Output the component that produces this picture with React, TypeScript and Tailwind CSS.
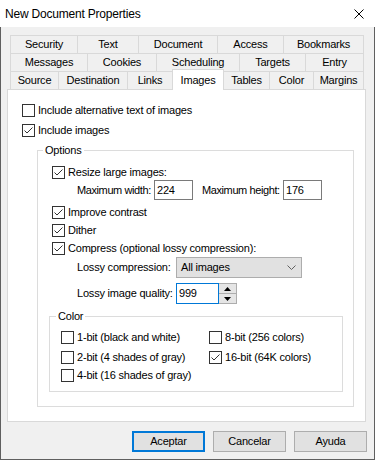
import type { ReactNode } from 'react';

function Box({ checked }: { checked?: boolean }) {
  return (
    <span className="flex h-[13px] w-[13px] shrink-0 items-center justify-center border border-[#333333] bg-white">
      {checked && (
        <svg width="11" height="11" viewBox="0 0 11 11">
          <path d="M1.5 5.5 L4 8 L9.5 2.5" fill="none" stroke="#333333" strokeWidth="1" />
        </svg>
      )}
    </span>
  );
}

function Check({ label, checked, className = '' }: { label: string; checked?: boolean; className?: string }) {
  return (
    <div className={`flex items-center ${className}`}>
      <Box checked={checked} />
      <span className="ml-[3px] whitespace-nowrap">{label}</span>
    </div>
  );
}

function Tab({ label, w, last }: { label: string; w: string; last?: boolean }) {
  return (
    <div
      className={`flex h-[18px] items-center justify-center border-l border-t border-[#d9d9d9] ${w} ${
        last ? 'border-r' : ''
      }`}
    >
      {label}
    </div>
  );
}

function Group({ title, className, legendClass, children }: { title: string; className: string; legendClass: string; children: ReactNode }) {
  return (
    <fieldset className={`border border-[#dcdcdc] ${className}`}>
      <legend className={`px-[2px] leading-[15px] ${legendClass}`}>{title}</legend>
      {children}
    </fieldset>
  );
}

function Button({ label, primary }: { label: string; primary?: boolean }) {
  return (
    <button
      className={`flex h-[21px] w-[73px] items-center justify-center bg-[#e1e1e1] ${
        primary ? 'border-2 border-[#0078d7]' : 'border border-[#adadad]'
      }`}
    >
      {label}
    </button>
  );
}

export default function App() {
  return (
    <div className="flex h-[460px] w-[375px] flex-col bg-white font-['Liberation_Sans',Arial,sans-serif] text-[11px] tracking-[-0.2px] text-black">
      {/* title bar */}
      <div className="flex h-[27px] shrink-0 items-center justify-between pl-[5px] pr-[11px]">
        <span className="text-[12px]">New Document Properties</span>
        <svg width="10" height="10" viewBox="0 0 10 10">
          <path d="M0.5 0.5 L9.5 9.5 M9.5 0.5 L0.5 9.5" stroke="#000" strokeWidth="1" />
        </svg>
      </div>

      <div className="flex flex-1 flex-col border-x border-b border-[#5f5f5f] bg-[#f0f0f0] pt-[8px]">
        {/* tabs */}
        <div className="ml-[9px] flex">
          <Tab label="Security" w="w-[67px]" />
          <Tab label="Text" w="w-[61px]" />
          <Tab label="Document" w="w-[79px]" />
          <Tab label="Access" w="w-[66px]" />
          <Tab label="Bookmarks" w="w-[81px]" last />
        </div>
        <div className="ml-[9px] flex">
          <Tab label="Messages" w="w-[77px]" />
          <Tab label="Cookies" w="w-[69px]" />
          <Tab label="Scheduling" w="w-[83px]" />
          <Tab label="Targets" w="w-[66px]" />
          <Tab label="Entry" w="w-[59px]" last />
        </div>
        <div className="ml-[9px] flex h-[18px] items-end">
          <Tab label="Source" w="w-[48px]" />
          <Tab label="Destination" w="w-[69px]" />
          <Tab label="Links" w="w-[45px]" />
          <div className="relative z-10 -mb-px flex h-[21px] w-[52px] items-center justify-center border-x border-t border-[#d9d9d9] bg-white">
            Images
          </div>
          <div className="flex h-[18px] w-[45px] items-center justify-center border-t border-[#d9d9d9]">Tables</div>
          <Tab label="Color" w="w-[44px]" />
          <Tab label="Margins" w="w-[51px]" last />
        </div>

        {/* page */}
        <div className="ml-[6px] h-[333px] w-[359px] border border-[#d9d9d9] bg-white pt-[10px]">
          <Check label="Include alternative text of images" className="h-[20px] pl-[14px]" />
          <Check label="Include images" checked className="h-[20px] pl-[14px]" />

          <Group title="Options" className="ml-[29px] mt-[3px] w-[317px] pb-[14px]" legendClass="ml-[5px]">
            <div className="pt-[6px]">
              <Check label="Resize large images:" checked className="h-[16px] pl-[14px]" />
              <div className="flex h-[20px] items-center pl-[39px]">
                <span className="w-[77px] whitespace-nowrap tracking-[-0.4px]">Maximum width:</span>
                <div className="flex h-[20px] w-[39px] items-center border border-[#7a7a7a] pl-[2px]">224</div>
                <span className="ml-[9px] w-[81px] whitespace-nowrap tracking-[-0.4px]">Maximum height:</span>
                <div className="flex h-[20px] w-[39px] items-center border border-[#7a7a7a] pl-[2px]">176</div>
              </div>
              <Check label="Improve contrast" checked className="mt-[4px] h-[17px] pl-[14px]" />
              <Check label="Dither" checked className="h-[18px] pl-[14px]" />
              <Check label="Compress (optional lossy compression):" checked className="h-[18px] pl-[14px]" />
              <div className="flex h-[21px] items-center pl-[39px]">
                <span className="w-[99px] whitespace-nowrap">Lossy compression:</span>
                <div className="flex h-[21px] w-[126px] items-center justify-between border border-[#adadad] bg-[#e1e1e1] pl-[4px] pr-[5px]">
                  <span>All images</span>
                  <svg width="9" height="5" viewBox="0 0 9 5">
                    <path d="M0.5 0.5 L4.5 4.5 L8.5 0.5" fill="none" stroke="#606060" strokeWidth="1" />
                  </svg>
                </div>
              </div>
              <div className="mt-[5px] flex h-[21px] items-center pl-[39px]">
                <span className="w-[99px] whitespace-nowrap">Lossy image quality:</span>
                <div className="flex h-[21px] w-[43px] items-center border border-[#0078d7] pl-[2px]">999</div>
                <div className="flex h-[21px] w-[18px] flex-col border border-l-0 border-[#adadad] bg-[#e5e5e5]">
                  <div className="flex flex-1 items-center justify-center border-b border-[#adadad]">
                    <svg width="7" height="4" viewBox="0 0 7 4">
                      <path d="M0 4 L3.5 0 L7 4 Z" fill="#000" />
                    </svg>
                  </div>
                  <div className="flex flex-1 items-center justify-center">
                    <svg width="7" height="4" viewBox="0 0 7 4">
                      <path d="M0 0 L3.5 4 L7 0 Z" fill="#000" />
                    </svg>
                  </div>
                </div>
              </div>

              <Group title="Color" className="ml-[11px] mt-[5px] w-[294px] pb-[8px]" legendClass="ml-[6px]">
                <div className="flex pl-[11px] pt-[3px]">
                  <div className="w-[148px]">
                    <Check label="1-bit (black and white)" className="h-[20px]" />
                    <Check label="2-bit (4 shades of gray)" className="h-[20px]" />
                    <Check label="4-bit (16 shades of gray)" className="h-[16px]" />
                  </div>
                  <div>
                    <Check label="8-bit (256 colors)" className="h-[20px]" />
                    <Check label="16-bit (64K colors)" checked className="h-[20px]" />
                  </div>
                </div>
              </Group>
            </div>
          </Group>
        </div>

        {/* buttons */}
        <div className="mt-[9px] flex justify-end gap-[8px] pr-[7px]">
          <Button label="Aceptar" primary />
          <Button label="Cancelar" />
          <Button label="Ayuda" />
        </div>
      </div>
    </div>
  );
}
